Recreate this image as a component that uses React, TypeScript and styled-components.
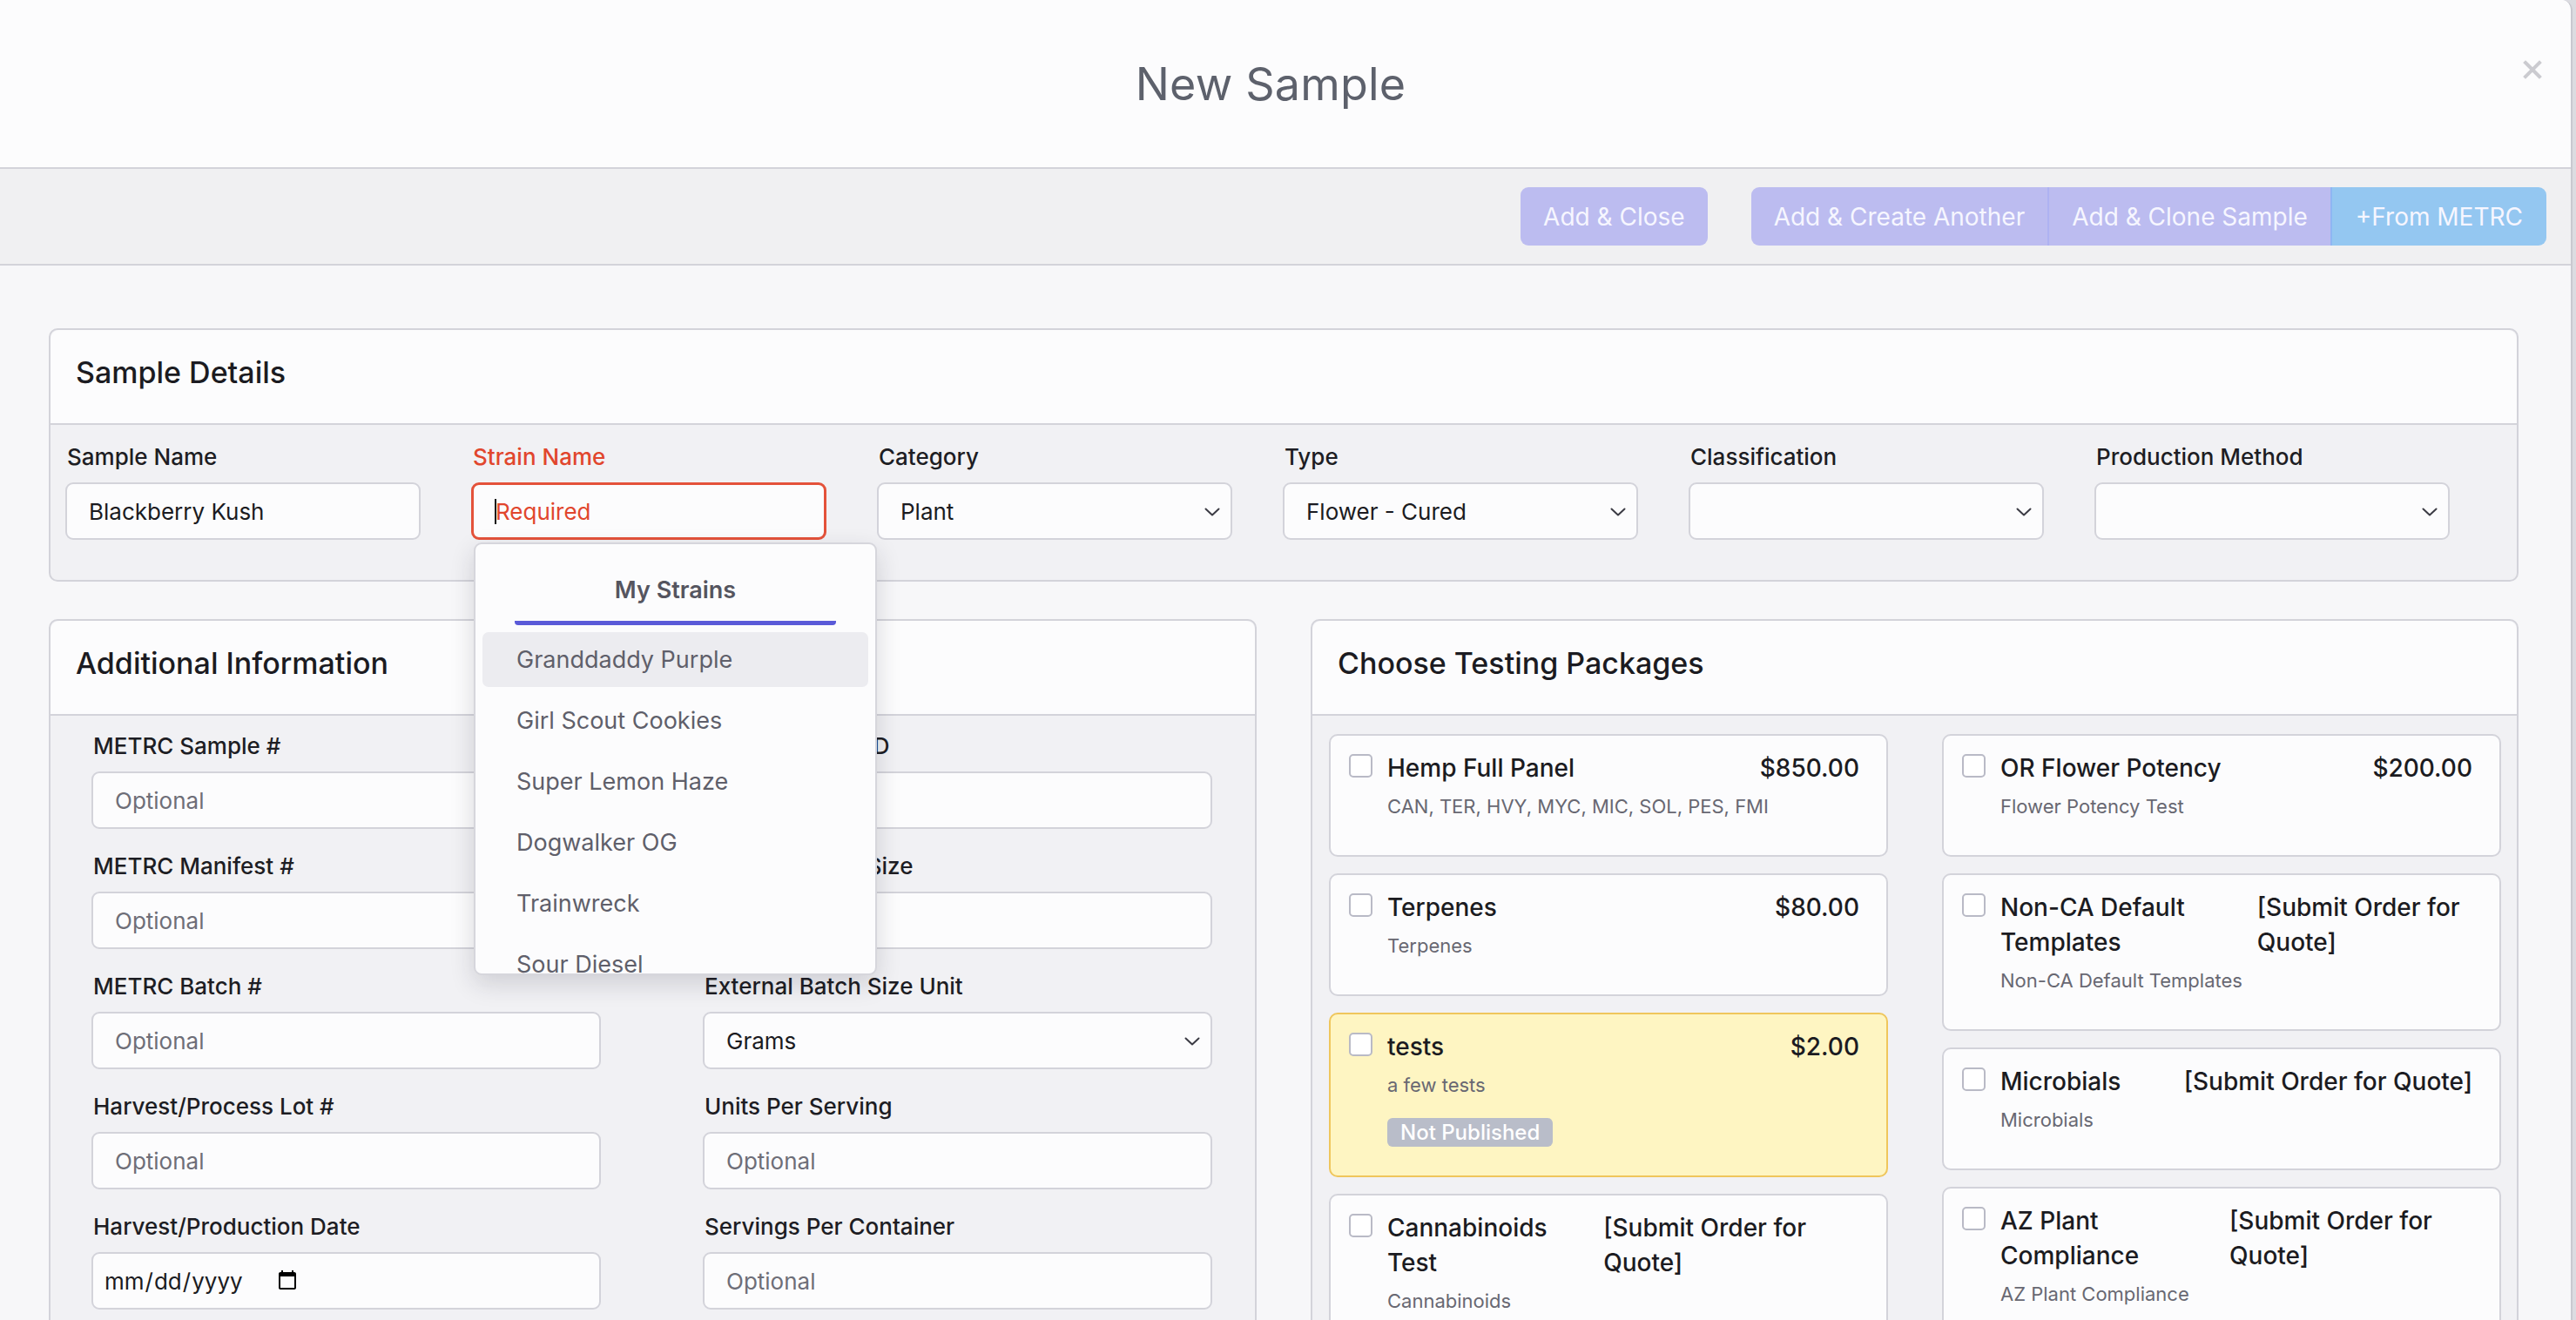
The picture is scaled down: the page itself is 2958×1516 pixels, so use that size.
import styled, { createGlobalStyle } from "styled-components";

const GlobalStyle = createGlobalStyle`
  html, body {
    margin: 0;
    padding: 0;
    width: 2958px;
    height: 1516px;
    overflow: hidden;
    background: #dcdce1;
    font-family: Inter, "Noto Sans", "Liberation Sans", sans-serif;
  }
  * { box-sizing: border-box; }
`;

const strains = ['Granddaddy Purple', 'Girl Scout Cookies', 'Super Lemon Haze', 'Dogwalker OG', 'Trainwreck', 'Sour Diesel']

type Pkg = { name: string; price: string; desc: string; draft?: boolean }

const leftPackages: Pkg[] = [
  { name: 'Hemp Full Panel', price: '$850.00', desc: 'CAN, TER, HVY, MYC, MIC, SOL, PES, FMI' },
  { name: 'Terpenes', price: '$80.00', desc: 'Terpenes' },
  { name: 'tests', price: '$2.00', desc: 'a few tests', draft: true },
  { name: 'Cannabinoids Test', price: '[Submit Order for Quote]', desc: 'Cannabinoids' },
]

const rightPackages: Pkg[] = [
  { name: 'OR Flower Potency', price: '$200.00', desc: 'Flower Potency Test' },
  { name: 'Non-CA Default Templates', price: '[Submit Order for Quote]', desc: 'Non-CA Default Templates' },
  { name: 'Microbials', price: '[Submit Order for Quote]', desc: 'Microbials' },
  { name: 'AZ Plant Compliance', price: '[Submit Order for Quote]', desc: 'AZ Plant Compliance' },
]

const Chevron = () => (
  <ChevronIcon width="18" height="10" viewBox="0 0 18 10" fill="none">
    <path d="M1.5 1.5 L9 8.5 L16.5 1.5" stroke="#3b3b44" strokeWidth="2" strokeLinecap="round" strokeLinejoin="round" />
  </ChevronIcon>
)

const SelectBox = ({ value, options }: { value: string; options: string[] }) => (
  <SelectWrap>
    <Select defaultValue={value}>
      {options.map((o) => <option key={o} value={o}>{o}</option>)}
    </Select>
    <Chevron />
  </SelectWrap>
)

const PackageCard = ({ pkg }: { pkg: Pkg }) => (
  <PkgCard $draft={pkg.draft}>
    <Check type="checkbox" />
    <PkgMain>
      <PkgTop>
        <PkgName>{pkg.name}</PkgName>
        <PkgPrice>{pkg.price}</PkgPrice>
      </PkgTop>
      <PkgDesc>{pkg.desc}</PkgDesc>
      {pkg.draft && <Badge>Not Published</Badge>}
    </PkgMain>
  </PkgCard>
)

const App = () => {
  return <>
    <GlobalStyle />
    <Modal>
      <Header>
        <Title>New Sample</Title>
        <Close aria-label="close">
          <svg width="22" height="22" viewBox="0 0 22 22">
            <path d="M3 3 L19 19 M19 3 L3 19" stroke="#cbcbd0" strokeWidth="4" strokeLinecap="square" />
          </svg>
        </Close>
      </Header>

      <Toolbar>
        <ActionButton>Add &amp; Close</ActionButton>
        <ButtonGroup>
          <GroupButton>Add &amp; Create Another</GroupButton>
          <GroupButton>Add &amp; Clone Sample</GroupButton>
          <GroupButton $blue>+From METRC</GroupButton>
        </ButtonGroup>
      </Toolbar>

      <Content>
        <Card>
          <CardHeader>Sample Details</CardHeader>
          <DetailsBody>
            <Field>
              <Label>Sample Name</Label>
              <Input defaultValue="Blackberry Kush" />
            </Field>
            <Field>
              <Label $error>Strain Name</Label>
              <StrainWrap>
                <Input $error placeholder="Required" />
                <Caret />
                <Dropdown>
                  <TabTitle>My Strains</TabTitle>
                  <TabLine />
                  <StrainList>
                    {strains.map((s, i) => <StrainItem key={s} $active={i === 0}>{s}</StrainItem>)}
                  </StrainList>
                </Dropdown>
              </StrainWrap>
            </Field>
            <Field>
              <Label>Category</Label>
              <SelectBox value="Plant" options={['Plant', 'Edible', 'Concentrate']} />
            </Field>
            <Field>
              <Label>Type</Label>
              <SelectBox value="Flower - Cured" options={['Flower - Cured', 'Flower - Fresh']} />
            </Field>
            <Field>
              <Label>Classification</Label>
              <SelectBox value="" options={['']} />
            </Field>
            <Field>
              <Label>Production Method</Label>
              <SelectBox value="" options={['']} />
            </Field>
          </DetailsBody>
        </Card>

        <Columns>
          <Card>
            <CardHeader>Additional Information</CardHeader>
            <InfoBody>
              <Field>
                <Label>METRC Sample #</Label>
                <Input placeholder="Optional" />
              </Field>
              <Field>
                <Label>External Batch ID</Label>
                <Input placeholder="Optional" />
              </Field>
              <Field>
                <Label>METRC Manifest #</Label>
                <Input placeholder="Optional" />
              </Field>
              <Field>
                <Label>External Batch Size</Label>
                <Input placeholder="Optional" />
              </Field>
              <Field>
                <Label>METRC Batch #</Label>
                <Input placeholder="Optional" />
              </Field>
              <Field>
                <Label>External Batch Size Unit</Label>
                <SelectBox value="Grams" options={['Grams', 'Kilograms', 'Pounds']} />
              </Field>
              <Field>
                <Label>Harvest/Process Lot #</Label>
                <Input placeholder="Optional" />
              </Field>
              <Field>
                <Label>Units Per Serving</Label>
                <Input placeholder="Optional" />
              </Field>
              <Field>
                <Label>Harvest/Production Date</Label>
                <DateInput type="date" />
              </Field>
              <Field>
                <Label>Servings Per Container</Label>
                <Input placeholder="Optional" />
              </Field>
            </InfoBody>
          </Card>

          <Card>
            <CardHeader>Choose Testing Packages</CardHeader>
            <PackagesBody>
              <PkgColumn>
                {leftPackages.map((p) => <PackageCard key={p.name} pkg={p} />)}
              </PkgColumn>
              <PkgColumn>
                {rightPackages.map((p) => <PackageCard key={p.name} pkg={p} />)}
              </PkgColumn>
            </PackagesBody>
          </Card>
        </Columns>
      </Content>
    </Modal>
  </>
}

const Modal = styled.div`
  width: 2954px;
  height: 1516px;
  overflow: hidden;
  background: #f7f7f9;
  border-right: 2px solid #c9c9d0;
  border-top-right-radius: 12px;
  display: flex;
  flex-direction: column;
`

const Header = styled.div`
  position: relative;
  height: 194px;
  flex-shrink: 0;
  display: flex;
  align-items: center;
  justify-content: center;
  padding-right: 34px;
  background: #fcfcfd;
  border-bottom: 2px solid #d3d3da;
`

const Title = styled.h1`
  margin: 0;
  font-size: 52px;
  font-weight: 400;
  color: #5d616c;
  letter-spacing: 0.2px;
`

const Close = styled.button`
  position: absolute;
  top: 69px;
  right: 33px;
  padding: 0;
  border: none;
  background: transparent;
  display: flex;
`

const Toolbar = styled.div`
  height: 111px;
  flex-shrink: 0;
  display: flex;
  align-items: center;
  justify-content: flex-end;
  gap: 50px;
  padding: 0 28px;
  background: #f0f0f2;
  border-bottom: 2px solid #d3d3da;
`

const ActionButton = styled.button`
  height: 67px;
  padding: 0 26px;
  border: none;
  border-radius: 9px;
  background: #bcbcf0;
  color: #f6f6ff;
  font-family: inherit;
  font-size: 28px;
  font-weight: 400;
`

const ButtonGroup = styled.div`
  display: flex;
  border-radius: 9px;
  overflow: hidden;
`

const GroupButton = styled.button<{ $blue?: boolean }>`
  height: 67px;
  padding: 0 ${p => p.$blue ? 27 : 26}px;
  border: none;
  border-left: 2px solid ${p => p.$blue ? '#8fb6f3' : '#aeb2f2'};
  background: ${p => p.$blue ? '#94c7f1' : '#bcbcf0'};
  color: #f6f6ff;
  font-family: inherit;
  font-size: 28px;
  &:first-child { border-left: none; }
`

const Content = styled.div`
  padding: 72px 60px 0 56px;
  display: flex;
  flex-direction: column;
  gap: 43px;
`

const Card = styled.section`
  background: #f1f1f4;
  border: 2px solid #d3d3da;
  border-radius: 10px;
  overflow: visible;
`

const CardHeader = styled.h2`
  margin: 0;
  height: 109px;
  display: flex;
  align-items: center;
  padding: 0 29px 10px;
  background: #fcfcfd;
  border-bottom: 2px solid #d3d3da;
  border-radius: 10px 10px 0 0;
  font-size: 34px;
  font-weight: 500;
  color: #1b1b21;
`

const DetailsBody = styled.div`
  display: flex;
  gap: 58px;
  padding: 19px 17px 46px;
  border-radius: 0 0 10px 10px;

  & > div { width: 408px; }
`

const Field = styled.div`
  display: flex;
  flex-direction: column;
  gap: 11px;
`

const Label = styled.label<{ $error?: boolean }>`
  font-size: 26px;
  line-height: 36px;
  font-weight: 500;
  color: ${p => p.$error ? '#e1462d' : '#1d1d23'};
  padding-left: 2px;
`

const Input = styled.input<{ $error?: boolean }>`
  width: 100%;
  height: 66px;
  padding: 0 25px;
  border: ${p => p.$error ? '3px solid #e4523a' : '2px solid #d3d3da'};
  border-radius: 9px;
  background: #fcfcfd;
  font-family: inherit;
  font-size: 26px;
  color: #1b1b21;
  outline: none;

  &::placeholder { color: ${p => p.$error ? '#e1462d' : '#6e6e78'}; }
`

const DateInput = styled(Input)`
  padding: 0 12px;
  color: #1b1b21;

  &::-webkit-datetime-edit { flex: none; }
  &::-webkit-calendar-picker-indicator { margin-left: 0; }
`

const SelectWrap = styled.div`
  position: relative;
  width: 100%;
`

const Select = styled.select`
  appearance: none;
  width: 100%;
  height: 66px;
  padding: 0 50px 0 25px;
  border: 2px solid #d3d3da;
  border-radius: 9px;
  background: #fcfcfd;
  font-family: inherit;
  font-size: 26px;
  color: #1b1b21;
`

const ChevronIcon = styled.svg`
  position: absolute;
  right: 14px;
  top: 29px;
  pointer-events: none;
`

const StrainWrap = styled.div`
  position: relative;
`

const Caret = styled.span`
  position: absolute;
  left: 27px;
  top: 19px;
  width: 2px;
  height: 29px;
  background: #111;
`

const Dropdown = styled.div`
  position: absolute;
  z-index: 10;
  top: calc(100% + 3px);
  left: 3px;
  width: 463px;
  height: 497px;
  overflow: hidden;
  background: #fcfcfd;
  border: 2px solid #d6d6dc;
  border-radius: 9px;
  box-shadow: 0 10px 28px rgba(30, 30, 50, 0.16);
`

const TabTitle = styled.div`
  padding-top: 35px;
  text-align: center;
  font-size: 27px;
  line-height: 36px;
  font-weight: 600;
  color: #55555f;
`

const TabLine = styled.div`
  margin: 17px 45px 0;
  height: 5px;
  background: #5a5ad8;
  border-radius: 0 0 4px 4px;
`

const StrainList = styled.div`
  margin-top: 8px;
  padding: 0 8px;
  display: flex;
  flex-direction: column;
  gap: 7px;
`

const StrainItem = styled.div<{ $active?: boolean }>`
  height: 63px;
  flex-shrink: 0;
  display: flex;
  align-items: center;
  padding-left: 39px;
  border-radius: 7px;
  background: ${p => p.$active ? '#ececf0' : 'transparent'};
  font-size: 27px;
  color: #5f5f6a;
`

const Columns = styled.div`
  display: grid;
  grid-template-columns: 1fr 1fr;
  gap: 62px;
  align-items: start;
`

const InfoBody = styled.div`
  display: grid;
  grid-template-columns: 1fr 1fr;
  column-gap: 117px;
  row-gap: 25px;
  padding: 17px 49px 40px 47px;
`

const PackagesBody = styled.div`
  display: grid;
  grid-template-columns: 1fr 1fr;
  column-gap: 62px;
  padding: 21px 18px 40px 19px;
  align-items: start;
`

const PkgColumn = styled.div`
  display: flex;
  flex-direction: column;
  gap: 19px;
`

const PkgCard = styled.div<{ $draft?: boolean }>`
  display: flex;
  gap: 17px;
  padding: 17px 31px ${p => p.$draft ? 33 : 39}px 21px;
  border: 2px solid ${p => p.$draft ? '#efc65c' : '#d3d3da'};
  border-radius: 10px;
  background: ${p => p.$draft ? '#fef5c2' : '#fcfcfd'};
`

const Check = styled.input`
  appearance: none;
  margin: 4px 0 0;
  flex-shrink: 0;
  width: 27px;
  height: 27px;
  border: 2px solid #b9bac6;
  border-radius: 5px;
  background: #fff;
`

const PkgMain = styled.div`
  flex: 1;
  min-width: 0;
  display: flex;
  flex-direction: column;
  align-items: flex-start;
`

const PkgTop = styled.div`
  width: 100%;
  display: flex;
  justify-content: space-between;
  gap: 28px;
  font-size: 28px;
  line-height: 40px;
  font-weight: 500;
  color: #1b1b21;
`

const PkgName = styled.span``

const PkgPrice = styled.span``

const PkgDesc = styled.div`
  margin-top: 7px;
  font-size: 22px;
  line-height: 34px;
  color: #686872;
`

const Badge = styled.span`
  margin-top: 21px;
  height: 33px;
  display: inline-flex;
  align-items: center;
  padding: 0 15px;
  border-radius: 6px;
  background: #b9bdc9;
  color: #fff;
  font-size: 24px;
  font-weight: 500;
`

export default App
